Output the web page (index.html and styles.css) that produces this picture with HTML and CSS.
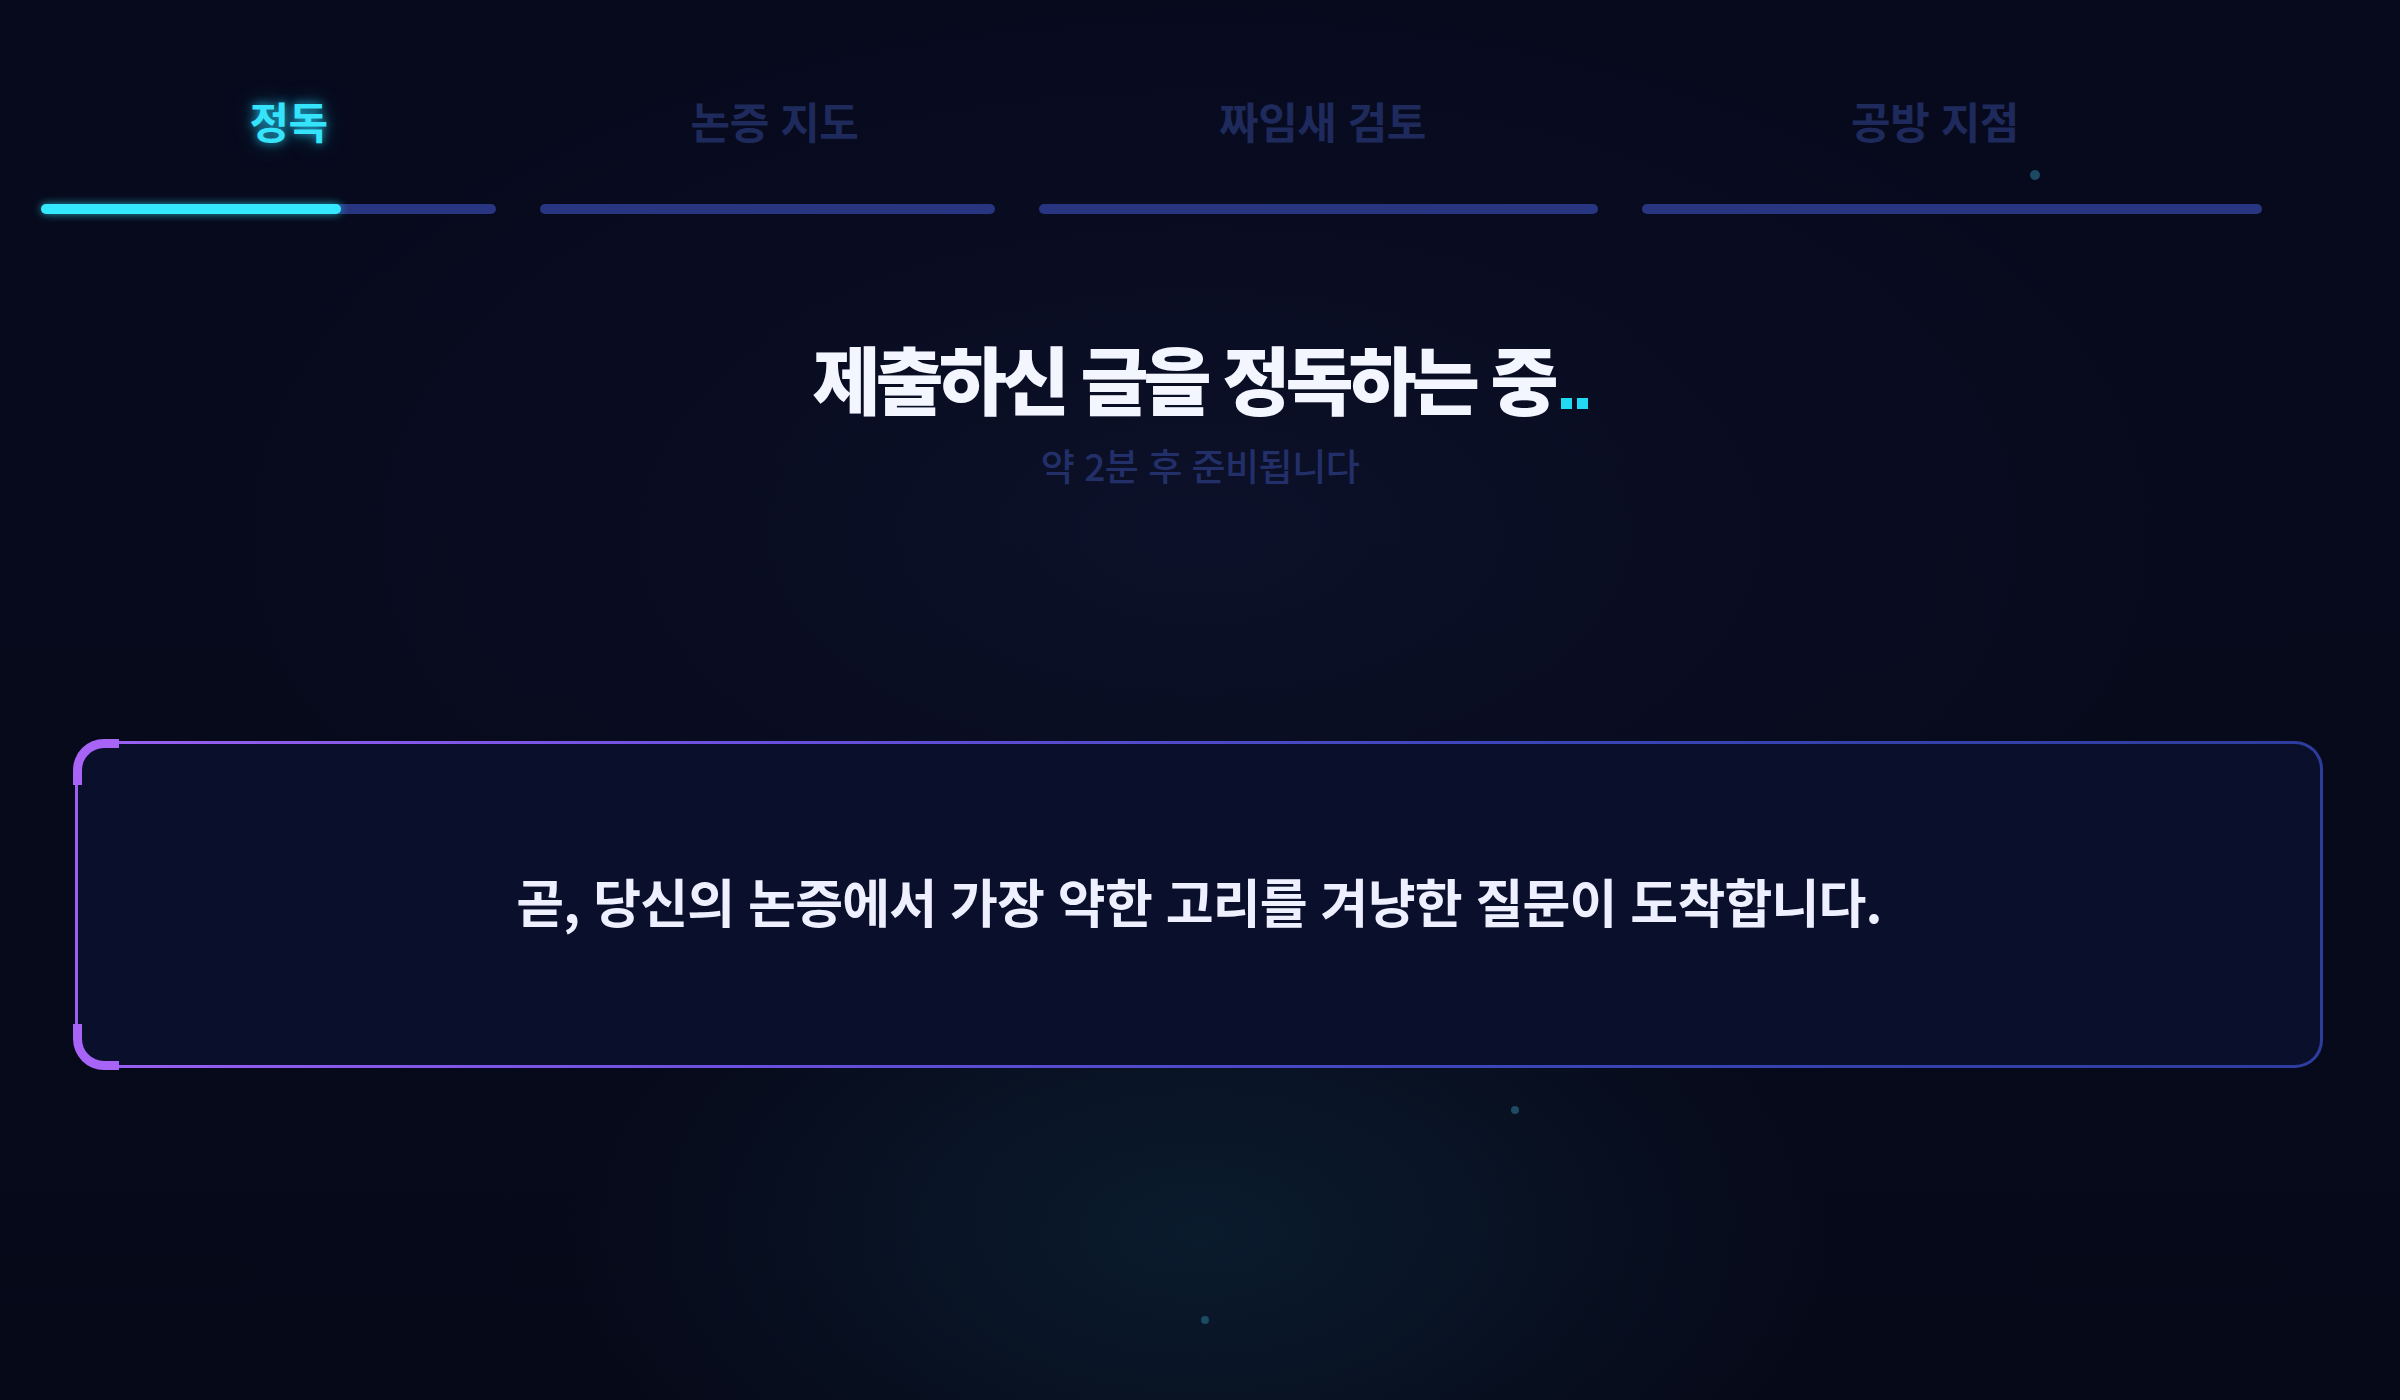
FILE: index.html
```html
<!DOCTYPE html>
<html lang="ko">
<head>
<meta charset="utf-8">
<title>정독 중</title>
<link rel="stylesheet" href="styles.css">
</head>
<body>
<div class="page">
  <span class="particle p1"></span>
  <span class="particle p2"></span>
  <span class="particle p3"></span>

  <nav class="steps">
    <div class="step active s1">
      <span class="step-label">정독</span>
      <div class="track"><div class="fill" style="width:66%"></div></div>
    </div>
    <div class="step s2">
      <span class="step-label">논증 지도</span>
      <div class="track"></div>
    </div>
    <div class="step s3">
      <span class="step-label">짜임새 검토</span>
      <div class="track"></div>
    </div>
    <div class="step s4">
      <span class="step-label">공방 지점</span>
      <div class="track"></div>
    </div>
  </nav>

  <header class="status">
    <h1 class="title">제출하신 글을 정독하는 중<span class="dots"><i></i><i></i></span></h1>
    <p class="eta">약 2분 후 준비됩니다</p>
  </header>

  <section class="notice">
    <span class="corner tl"></span>
    <span class="corner bl"></span>
    <p class="notice-text">곧, 당신의 논증에서 가장 약한 고리를 겨냥한 질문이 도착합니다.</p>
  </section>
</div>
</body>
</html>
```
FILE: styles.css
```css
html, body {
  margin: 0;
  padding: 0;
}

body {
  width: 2400px;
  height: 1400px;
  overflow: hidden;
  background-color: #060918;
  font-family: "Noto Sans CJK KR", "Noto Sans", sans-serif;
}

.page {
  position: relative;
  width: 2400px;
  height: 1400px;
  box-sizing: border-box;
  padding-top: 94px;
  background:
    radial-gradient(ellipse 900px 520px at 50% 88%, rgba(14, 42, 62, 0.55), rgba(14, 42, 62, 0) 70%),
    radial-gradient(ellipse 1300px 700px at 50% 38%, rgba(16, 22, 52, 0.55), rgba(16, 22, 52, 0) 75%),
    linear-gradient(180deg, #070a1d 0%, #070a1b 50%, #060918 100%);
}

/* ---------- steps ---------- */
.steps {
  display: grid;
  grid-template-columns: 455px 455px 559px 620px;
  column-gap: 44px;
  padding-left: 41px;
}

.step {
  display: flex;
  flex-direction: column;
  align-items: center;
}

.step-label {
  font-size: 43px;
  line-height: 52px;
  font-weight: 700;
  color: #1f2a5c;
  letter-spacing: -0.5px;
  white-space: nowrap;
}

.s1 .step-label { margin-left: 40px; }
.s2 .step-label { margin-left: 14px; }
.s3 .step-label { margin-left: 8px; }
.s4 .step-label { margin-right: 34px; }

.step.active .step-label {
  color: #35e3fb;
  text-shadow: 0 0 10px rgba(40, 214, 255, 0.75), 0 0 22px rgba(40, 214, 255, 0.35);
}

.track {
  align-self: stretch;
  margin-top: 58px;
  height: 10px;
  border-radius: 5px;
  background: #283580;
}

.fill {
  height: 100%;
  border-radius: 5px;
  background: #33e8ff;
  box-shadow: 0 0 8px rgba(51, 232, 255, 0.65);
}

/* ---------- status ---------- */
.status {
  display: flex;
  flex-direction: column;
  align-items: center;
  margin-top: 116px;
}

.title {
  margin: 0;
  font-size: 74px;
  line-height: 94px;
  font-weight: 900;
  color: #f3f6ff;
  letter-spacing: -5px;
  white-space: nowrap;
  display: flex;
  align-items: baseline;
}

.dots {
  display: inline-flex;
  gap: 5px;
  margin-left: 7px;
}

.dots i {
  display: block;
  width: 11px;
  height: 11px;
  background: #22d8f2;
}

.eta {
  margin: 20px 0 0;
  font-size: 37px;
  line-height: 42px;
  font-weight: 500;
  color: #232f68;
  letter-spacing: -0.5px;
}

/* ---------- notice card ---------- */
.notice {
  position: relative;
  margin: 255px 77px 0 75px;
  height: 327px;
  box-sizing: border-box;
  padding-bottom: 8px;
  border: 3px solid transparent;
  border-radius: 28px;
  background:
    linear-gradient(#0a0f2c, #0a0f2c) padding-box,
    linear-gradient(90deg, #9d5ff3 0%, #6a4fe0 30%, #3a45b8 65%, #2d3d9e 100%) border-box;
  display: flex;
  align-items: center;
  justify-content: center;
}

.corner {
  position: absolute;
  left: -5px;
  width: 46px;
  height: 46px;
  box-sizing: border-box;
  border-left: 9px solid #a863f7;
}

.corner.tl {
  top: -5px;
  border-top: 9px solid #a863f7;
  border-top-left-radius: 31px;
}

.corner.bl {
  bottom: -5px;
  border-bottom: 9px solid #a863f7;
  border-bottom-left-radius: 31px;
}

.notice-text {
  margin: 0;
  font-size: 52px;
  line-height: 62px;
  font-weight: 700;
  color: #eef0ff;
  letter-spacing: -0.8px;
  white-space: nowrap;
}

/* ---------- particles ---------- */
.particle {
  position: absolute;
  border-radius: 50%;
  background: #1b4a62;
}

.p1 { left: 2030px; top: 170px; width: 10px; height: 10px; }
.p2 { left: 1511px; top: 1106px; width: 8px; height: 8px; }
.p3 { left: 1201px; top: 1316px; width: 8px; height: 8px; }
```
